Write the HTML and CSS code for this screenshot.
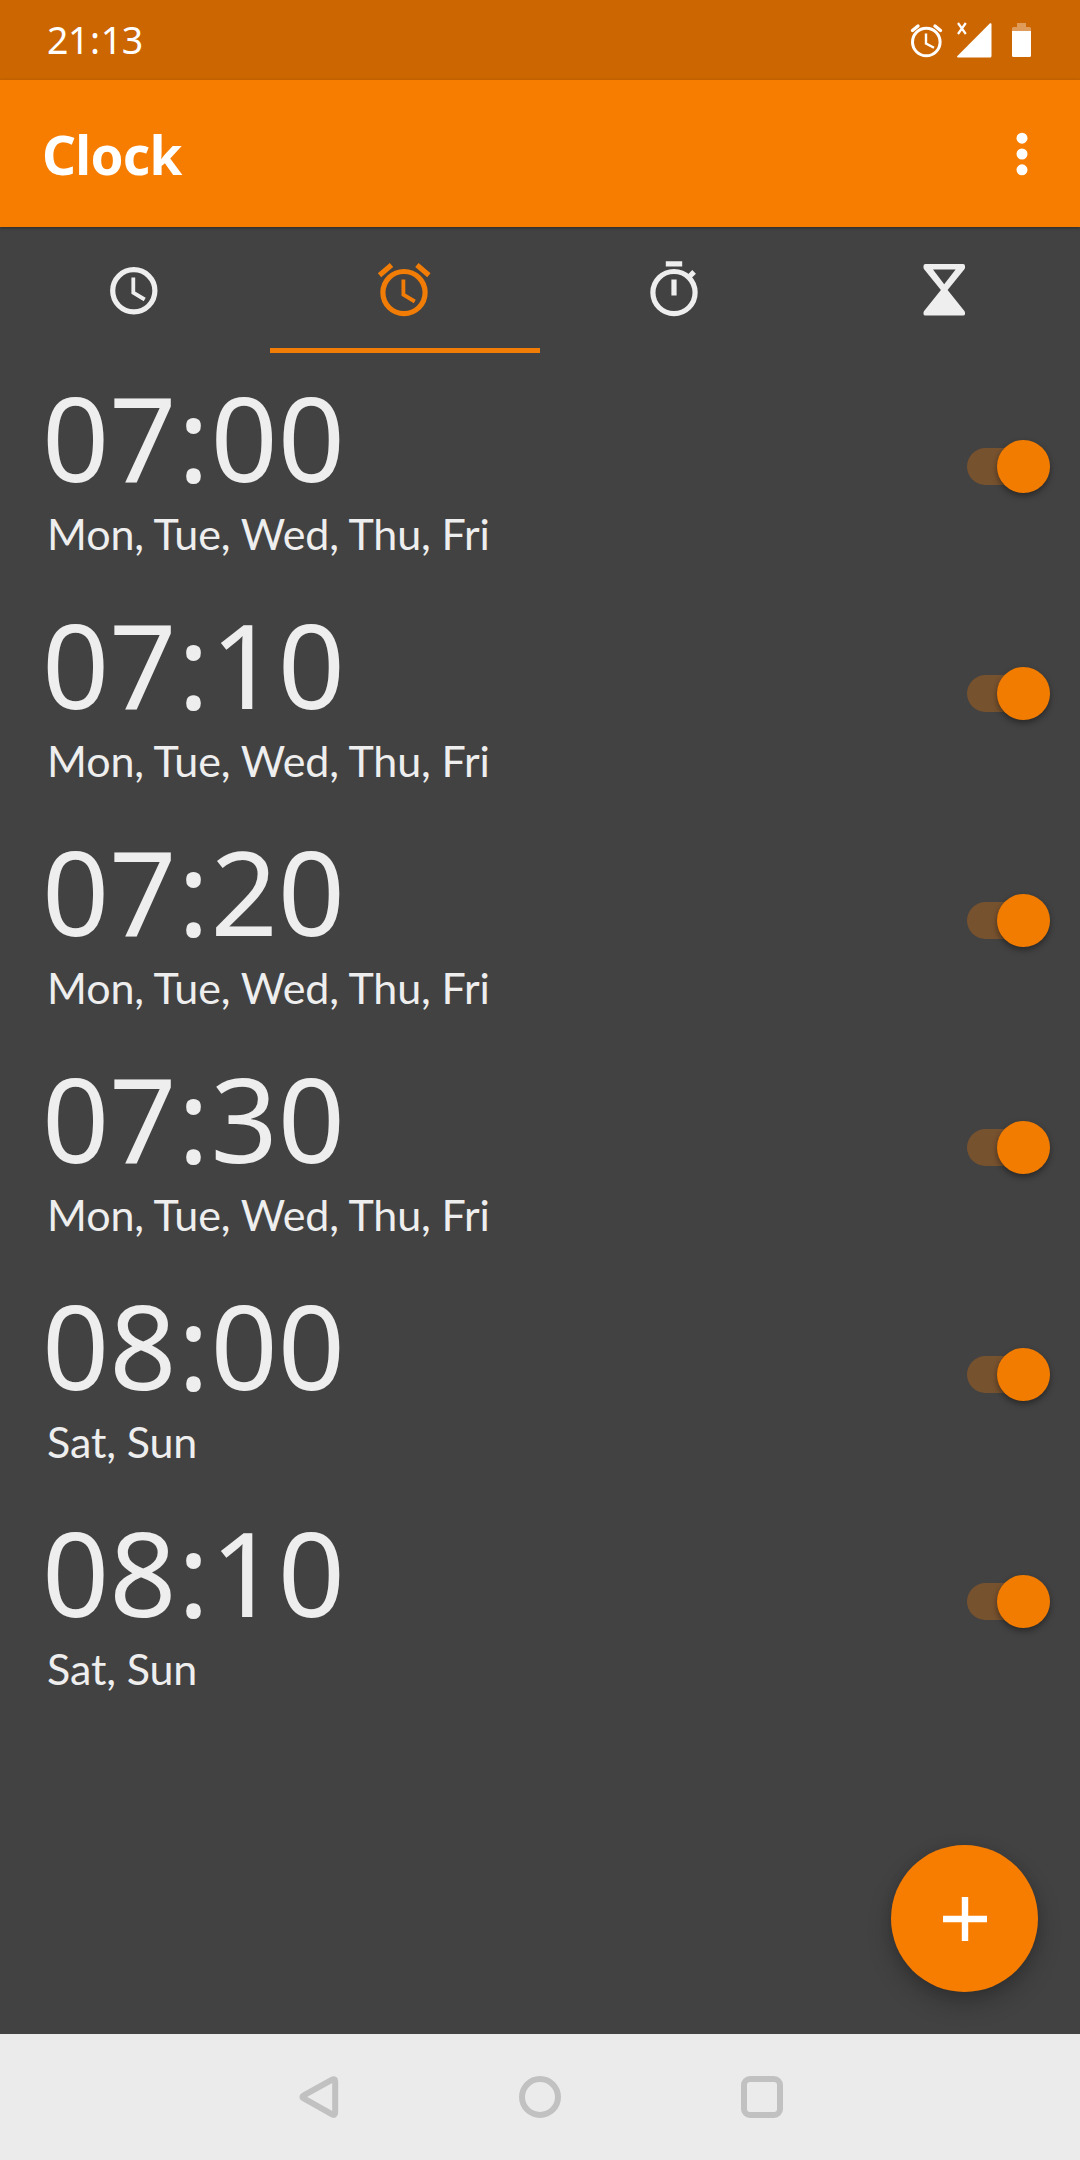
FILE: index.html
```html
<!DOCTYPE html>
<html lang="en">
<head>
<meta charset="utf-8">
<title>Clock</title>
<link rel="stylesheet" href="styles.css">
</head>
<body>
<div class="screen">
  <div class="status">
    <span class="status-time">21<span class="sep">:</span>13</span>
    <svg class="status-icons" width="124" height="40" viewBox="908 20 124 40">
      <g fill="none" stroke="#fff">
        <circle cx="926.3" cy="42" r="13.8" stroke-width="3"/>
        <path d="M926 33.5v10l8 4.3" stroke-width="2.4"/>
        <path d="M912.500 30.500l5.500-4.500M940.500 30.500l-5.500-4.500" stroke-width="3.400" stroke-linecap="round"/>
        <path d="M958 23l7.800 11M965.800 23l-7.800 11" stroke-width="2.200"/>
      </g>
      <path d="M990 23.300q1.500-.6 1.500 1.200V56q0 1.500-1.500 1.500h-32q-1.800-.2-.6-1.600z" fill="#fff"/>
      <path d="M1012 31v-2.500q0-1.500 1.500-1.500h3.500v-4h9v4h3.500q1.500 0 1.500 1.500V31z" fill="#fff" fill-opacity=".35"/>
      <path d="M1012 31h19v24.500q0 1.500-1.500 1.500h-16q-1.500 0-1.500-1.500z" fill="#fff"/>
    </svg>
  </div>
  <header class="appbar">
    <h1>Clock</h1>
    <svg class="more" width="12" height="44" viewBox="0 0 12 44" fill="#fff">
      <circle cx="6" cy="6.200" r="5.500"/><circle cx="6" cy="22" r="5.500"/><circle cx="6" cy="37.800" r="5.500"/>
    </svg>
  </header>
  <nav class="tabs">
    <div class="tab">
      <svg width="63" height="63" viewBox="0 0 63 63" fill="none" stroke="currentColor">
        <circle cx="30.800" cy="31.800" r="21.100" stroke-width="5.200"/>
        <path d="M30.300 18.500v15.200l11.400 6.800" stroke-width="3.800"/>
      </svg>
    </div>
    <div class="tab active">
      <svg width="63" height="63" viewBox="0 0 63 63" fill="none" stroke="currentColor">
        <circle cx="31" cy="33.600" r="21.100" stroke-width="5.200"/>
        <path d="M30.400 20.500v15.200l11.400 6.800" stroke-width="3.800"/>
        <path d="M6.500 16.200l12-10.100M55.900 16.200l-12-10.100" stroke-width="5.200"/>
      </svg>
    </div>
    <div class="tab">
      <svg width="63" height="63" viewBox="0 0 63 63" fill="none" stroke="currentColor">
        <circle cx="31" cy="33.600" r="21.100" stroke-width="5.200"/>
        <path d="M22.800 4.800h16.400M31 20.500v16M45.500 18.500l5.600-5.600" stroke-width="5.200"/>
      </svg>
    </div>
    <div class="tab">
      <svg width="63" height="63" viewBox="0 0 63 63" fill="currentColor">
        <path fill-rule="evenodd" d="M12 5H50q2 0 2 2v1.500q0 1-.8 2L34.600 31l16.600 20.800q.8 1 .8 2V55q0 1.500-2 1.500H12.500q-2 0-2-1.500v-1.200q0-1 .8-2L27.900 31 11.300 10.500q-.8-1-.8-2V7q0-2 2-2zM20 10.600L31.200 25.300 42.600 10.600z"/>
      </svg>
    </div>
  </nav>
  <main class="alarms">
    <div class="alarm">
      <div class="info"><div class="time">07<span class="sep">:</span>00</div><div class="days">Mon, Tue, Wed, Thu, Fri</div></div>
      <div class="switch"><div class="thumb"></div></div>
    </div>
    <div class="alarm">
      <div class="info"><div class="time">07<span class="sep">:</span>10</div><div class="days">Mon, Tue, Wed, Thu, Fri</div></div>
      <div class="switch"><div class="thumb"></div></div>
    </div>
    <div class="alarm">
      <div class="info"><div class="time">07<span class="sep">:</span>20</div><div class="days">Mon, Tue, Wed, Thu, Fri</div></div>
      <div class="switch"><div class="thumb"></div></div>
    </div>
    <div class="alarm">
      <div class="info"><div class="time">07<span class="sep">:</span>30</div><div class="days">Mon, Tue, Wed, Thu, Fri</div></div>
      <div class="switch"><div class="thumb"></div></div>
    </div>
    <div class="alarm">
      <div class="info"><div class="time">08<span class="sep">:</span>00</div><div class="days">Sat, Sun</div></div>
      <div class="switch"><div class="thumb"></div></div>
    </div>
    <div class="alarm">
      <div class="info"><div class="time">08<span class="sep">:</span>10</div><div class="days">Sat, Sun</div></div>
      <div class="switch"><div class="thumb"></div></div>
    </div>
    <div class="fab">
      <svg width="44" height="44" viewBox="0 0 44 44"><path d="M22 0v44M0 22h44" stroke="#fff" stroke-width="6.400"/></svg>
    </div>
  </main>
  <footer class="navbar">
    <svg width="42" height="42" viewBox="0 0 42 42"><path d="M36 5.500V36.500q0 3.500-3 1.800L5 22.600Q1.500 21 5 19.200L33 3.700Q36 2 36 5.500z" transform="translate(2.200 0)"/></svg>
    <svg width="42" height="42" viewBox="0 0 42 42"><circle cx="21" cy="21" r="18"/></svg>
    <svg width="42" height="42" viewBox="0 0 42 42"><rect x="3" y="3" width="36" height="36" rx="6"/></svg>
  </footer>
</div>
</body>
</html>
```
FILE: styles.css
```css
body {
  margin: 0;
  font-family: "Noto Sans", sans-serif;
  color: #eee;
}
.screen {
  width: 1080px;
  height: 2160px;
  display: flex;
  flex-direction: column;
  background: #424242;
}
.status {
  height: 80px;
  display: flex;
  justify-content: space-between;
  align-items: center;
  padding: 0 48px 0 47px;
  background: #cc6600;
  color: #fff;
}
.status-time {
  font-size: 37.5px;
  font-weight: 400;
  line-height: 80px;
  letter-spacing: -0.4px;
}
.status-time .sep {
  margin: 0 1px;
}
.appbar {
  height: 147px;
  display: flex;
  justify-content: space-between;
  align-items: center;
  box-sizing: border-box;
  padding: 0 52px 0 42px;
  background: #f77d00;
  box-shadow: 0 1px 3px rgba(0, 0, 0, 0.35);
  color: #fff;
}
.appbar h1 {
  margin: 0;
  padding-top: 2px;
  font-size: 53px;
  font-weight: 700;
  line-height: 145px;
  letter-spacing: -0.7px;
}
.tabs {
  height: 126px;
  display: grid;
  grid-template-columns: repeat(4, 1fr);
}
.tab {
  display: flex;
  justify-content: center;
  align-items: center;
  box-sizing: border-box;
  padding: 5px 1px 0 0;
  border-bottom: 5px solid transparent;
}
.tab.active {
  color: #f17c06;
  border-color: #f17c06;
}
.alarms {
  flex: 1;
  position: relative;
}
.alarm {
  height: 227px;
  display: flex;
  justify-content: space-between;
  align-items: center;
  box-sizing: border-box;
  padding: 0 30px 0 42px;
}
.info {
  padding-top: 1px;
}
.time {
  font-size: 117.6px;
  line-height: 133px;
}
.time .sep {
  margin: 0 1.2px;
}
.days {
  padding-left: 5px;
  font-family: Lato, sans-serif;
  font-size: 43px;
  line-height: 61px;
  letter-spacing: -0.12px;
  white-space: nowrap;
}
.switch {
  width: 83px;
  height: 37px;
  display: flex;
  justify-content: flex-end;
  align-items: center;
  border-radius: 19px;
  background: #77522f;
}
.thumb {
  width: 53px;
  height: 53px;
  border-radius: 50%;
  background: #f17c00;
  box-shadow: 0 3px 6px rgba(0, 0, 0, 0.4);
}
.fab {
  position: absolute;
  right: 42px;
  bottom: 42px;
  width: 147px;
  height: 147px;
  display: flex;
  justify-content: center;
  align-items: center;
  border-radius: 50%;
  background: #f77d00;
  box-shadow: 0 12px 24px rgba(0, 0, 0, 0.22), 0 2px 12px rgba(0, 0, 0, 0.12);
}
.navbar {
  height: 126px;
  display: flex;
  justify-content: center;
  align-items: center;
  gap: 180px;
  background: #ebebeb;
}
.navbar svg {
  fill: none;
  stroke: #c1c1c1;
  stroke-width: 6px;
}
```
